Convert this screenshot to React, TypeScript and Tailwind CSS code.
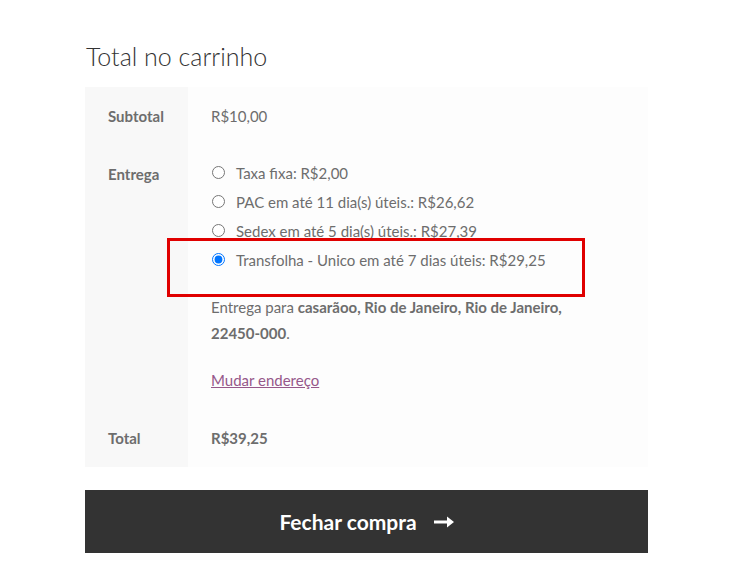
import { ReactNode } from "react";

const rates = [
    { id: "flat", label: "Taxa fixa: R$2,00", checked: false },
    { id: "pac", label: "PAC em até 11 dia(s) úteis.: R$26,62", checked: false },
    { id: "sedex", label: "Sedex em até 5 dia(s) úteis.: R$27,39", checked: false },
    { id: "transfolha", label: "Transfolha - Unico em até 7 dias úteis: R$29,25", checked: true },
];

function Row({ label, children }: { label: string; children: ReactNode }) {
    return (
        <div className="flex">
            <div className="w-[103px] shrink-0 bg-[#f8f8f8] px-[23px] py-4 font-bold text-[#6d6d6d]">
                {label}
            </div>
            <div className="flex-1 bg-[#fdfdfd] px-[23px] py-4">{children}</div>
        </div>
    );
}

export default function App() {
    return (
        <div className="min-h-[587px] bg-white font-['Lato',sans-serif] text-[15px] leading-[26px] text-[#6d6d6d]">
            <div className="relative ml-[85px] w-[563px] pt-[38px]">
                <h2 className="mb-[13px] pl-px text-[25px] leading-[36px] font-light text-[#333]">
                    Total no carrinho
                </h2>

                <div className="flex flex-col">
                    <Row label="Subtotal">R$10,00</Row>

                    <Row label="Entrega">
                        <ul className="-mt-[3px]">
                            {rates.map((rate) => (
                                <li key={rate.id} className="flex h-[29px] items-center">
                                    <input
                                        type="radio"
                                        name="shipping"
                                        checked={rate.checked}
                                        readOnly
                                        className="m-0 ml-[1px] h-[13px] w-[13px]"
                                    />
                                    <span className="ml-[11px]">{rate.label}</span>
                                </li>
                            ))}
                        </ul>
                        <p className="mt-[20px]">
                            Entrega para{" "}
                            <strong className="font-bold">casarãoo, Rio de Janeiro, Rio de Janeiro,</strong>
                            <br />
                            <strong className="font-bold">22450-000</strong>.
                        </p>
                        <a
                            href="#"
                            className="mt-[21px] -mb-[1px] inline-block text-[#96588a] underline"
                        >
                            Mudar endereço
                        </a>
                    </Row>

                    <Row label="Total">
                        <strong className="font-bold">R$39,25</strong>
                    </Row>
                </div>

                <button className="mt-[23px] flex h-[63px] w-full items-center justify-center gap-[17px] bg-[#333333] text-[21px] font-bold text-white">
                    Fechar compra
                    <svg width="20" height="12" viewBox="0 0 20 12" fill="white">
                        <path d="M0 4.5h13V0.5L20 6l-7 5.5V7.5H0z" />
                    </svg>
                </button>

                {/* annotation box drawn over the selected rate */}
                <div className="pointer-events-none absolute top-[238px] left-[82px] h-[59px] w-[418px] border-[3px] border-[#e00000]" />
            </div>
        </div>
    );
}
